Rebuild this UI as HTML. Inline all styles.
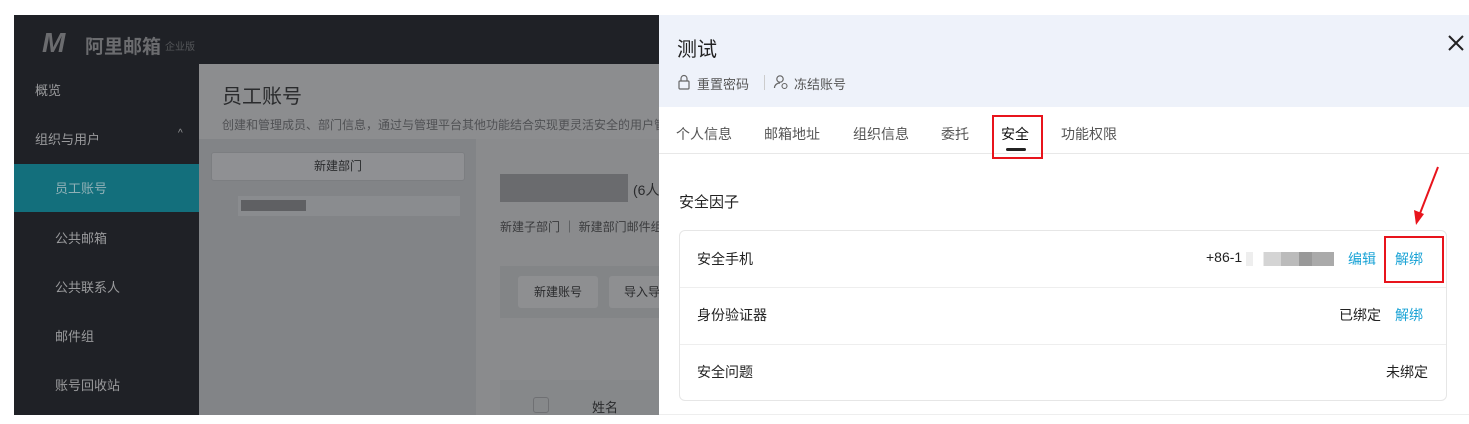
<!DOCTYPE html>
<html><head><meta charset="utf-8"><style>
*{margin:0;padding:0;box-sizing:border-box}
body{width:1469px;height:424px;background:#fff;position:relative;overflow:hidden;font-family:"Liberation Sans","Noto Sans CJK SC",sans-serif}
.a{position:absolute}
.side{color:#9a9b9d;font-size:13px}
.r{font-size:14px}
</style></head><body>
<div class="a" style="left:14px;top:15px;width:645px;height:400px;background:#1f2126"></div>
<div class="a" style="left:42px;top:27px;font-size:28px;font-weight:bold;color:#6b6c6f;font-style:italic">M</div>
<div class="a" style="left:85px;top:32px;font-size:19px;font-weight:bold;color:#6b6c6f">阿里邮箱</div>
<div class="a" style="left:165px;top:38px;font-size:10px;color:#55575a">企业版</div>
<div class="a side" style="left:35px;top:80px">概览</div>
<div class="a side" style="left:35px;top:129px">组织与用户</div>
<div class="a side" style="left:178px;top:128px;font-size:10px">^</div>
<div class="a" style="left:14px;top:164px;width:185px;height:48px;background:#136f7c"></div>
<div class="a side" style="left:55px;top:178px;color:#8fb0b6">员工账号</div>
<div class="a side" style="left:55px;top:228px">公共邮箱</div>
<div class="a side" style="left:55px;top:277px">公共联系人</div>
<div class="a side" style="left:55px;top:326px">邮件组</div>
<div class="a side" style="left:55px;top:375px">账号回收站</div>
<div class="a" style="left:199px;top:64px;width:460px;height:351px;background:#8a8b8d"></div>
<div class="a" style="left:199px;top:64px;width:460px;height:75px;background:#8c8d8f"></div>
<div class="a" style="left:222px;top:80px;font-size:20px;color:#2a2b2d">员工账号</div>
<div class="a" style="left:222px;top:116px;font-size:12px;color:#505154;white-space:nowrap;width:437px;overflow:hidden">创建和管理成员、部门信息，通过与管理平台其他功能结合实现更灵活安全的用户管理</div>
<div class="a" style="left:199px;top:139px;width:277px;height:276px;background:#828487"></div>
<div class="a" style="left:211px;top:152px;width:254px;height:29px;background:#8f9093;border:1px solid #7c7e81;border-radius:3px;text-align:center;font-size:12px;color:#2a2b2d;line-height:27px">新建部门</div>
<div class="a" style="left:238px;top:196px;width:222px;height:20px;background:#8a8c8f"></div>
<div class="a" style="left:241px;top:200px;width:65px;height:11px;background:#5f6063"></div>
<div class="a" style="left:500px;top:174px;width:128px;height:28px;background:#6a6b6e"></div>
<div class="a" style="left:633px;top:180px;font-size:14px;color:#2a2b2d">(6人</div>
<div class="a" style="left:500px;top:218px;font-size:12px;color:#3a3b3d;white-space:nowrap">新建子部门 ｜ 新建部门邮件组</div>
<div class="a" style="left:500px;top:266px;width:159px;height:52px;background:#838587"></div>
<div class="a" style="left:518px;top:276px;width:80px;height:32px;background:#8e8f91;border-radius:3px;font-size:12px;color:#2a2b2d;text-align:center;line-height:32px">新建账号</div>
<div class="a" style="left:609px;top:276px;width:60px;height:32px;background:#8e8f91;border-radius:3px;font-size:12px;color:#2a2b2d;line-height:32px;padding-left:15px">导入导</div>
<div class="a" style="left:500px;top:380px;width:159px;height:35px;background:#86888a"></div>
<div class="a" style="left:533px;top:397px;width:16px;height:16px;border:1px solid #6f7073;border-radius:3px"></div>
<div class="a" style="left:592px;top:397px;font-size:13px;color:#2a2b2d">姓名</div>
<div class="a" style="left:659px;top:15px;width:810px;height:400px;background:#fff;border-bottom:1px solid #eee"></div>
<div class="a" style="left:659px;top:15px;width:810px;height:92px;background:#eef2fa"></div>
<div class="a" style="left:677px;top:33px;font-size:20px;color:#222">测试</div>
<svg class="a" style="left:1446px;top:33px" width="20" height="20"><path d="M3 3L17 17M17 3L3 17" stroke="#222" stroke-width="2"/></svg>
<svg class="a" style="left:677px;top:74px" width="14" height="16"><rect x="2" y="7" width="10" height="8" rx="1" fill="none" stroke="#666" stroke-width="1.2"/><path d="M4 7V4.5a3 3 0 0 1 6 0V7" fill="none" stroke="#666" stroke-width="1.2"/></svg>
<div class="a" style="left:697px;top:74px;font-size:13px;color:#555">重置密码</div>
<div class="a" style="left:764px;top:75px;width:1px;height:15px;background:#ccc"></div>
<svg class="a" style="left:773px;top:74px" width="16" height="16"><circle cx="7" cy="5" r="3.2" fill="none" stroke="#666" stroke-width="1.2"/><path d="M1.5 14c0-3 2.5-5 5.5-5" fill="none" stroke="#666" stroke-width="1.2"/><circle cx="11.5" cy="12" r="2.5" fill="none" stroke="#666" stroke-width="1.1"/></svg>
<div class="a" style="left:794px;top:74px;font-size:13px;color:#555">冻结账号</div>
<div class="a" style="left:659px;top:153px;width:810px;height:1px;background:#e8e8e8"></div>
<div class="a" style="top:124px;left:676px;font-size:14px;color:#555">个人信息</div>
<div class="a" style="top:124px;left:764px;font-size:14px;color:#555">邮箱地址</div>
<div class="a" style="top:124px;left:853px;font-size:14px;color:#555">组织信息</div>
<div class="a" style="top:124px;left:941px;font-size:14px;color:#555">委托</div>
<div class="a" style="top:124px;left:1001px;font-size:14px;color:#111">安全</div>
<div class="a" style="top:148px;left:1006px;width:20px;height:3px;background:#222;border-radius:2px"></div>
<div class="a" style="top:115px;left:992px;width:51px;height:44px;border:2px solid #e8141c"></div>
<div class="a" style="top:124px;left:1061px;font-size:14px;color:#555">功能权限</div>
<div class="a" style="top:191px;left:679px;font-size:15px;color:#222">安全因子</div>
<div class="a" style="top:230px;left:679px;width:768px;height:171px;border:1px solid #e6e6e6;border-radius:6px"></div>
<div class="a" style="top:287px;left:680px;width:766px;height:1px;background:#eee"></div>
<div class="a" style="top:344px;left:680px;width:766px;height:1px;background:#eee"></div>
<div class="a r" style="top:249px;left:697px;color:#222">安全手机</div>
<div class="a r" style="top:305px;left:697px;color:#222">身份验证器</div>
<div class="a r" style="top:362px;left:697px;color:#222">安全问题</div>
<div class="a r" style="top:249px;left:1206px;color:#222">+86-1</div>
<div class="a" style="top:252px;left:1246px;width:88px;height:14px;background:linear-gradient(90deg,#eee 0 8%,#fff 8% 20%,#d4d4d4 20% 40%,#bbb 40% 60%,#999 60% 75%,#aaa 75%)"></div>
<div class="a r" style="top:249px;left:1348px;color:#1aa3d6">编辑</div>
<div class="a r" style="top:249px;left:1395px;color:#1aa3d6">解绑</div>
<div class="a" style="top:236px;left:1384px;width:60px;height:47px;border:2px solid #e8141c"></div>
<div class="a r" style="top:305px;left:1339px;color:#222">已绑定</div>
<div class="a r" style="top:305px;left:1395px;color:#1aa3d6">解绑</div>
<div class="a r" style="top:362px;left:1386px;color:#222">未绑定</div>
<svg class="a" style="left:1405px;top:164px" width="40" height="66"><path d="M33 3L14 52" stroke="#e8141c" stroke-width="2"/><path d="M9 46L11 61L19 50Z" fill="#e8141c"/></svg>
</body></html>
